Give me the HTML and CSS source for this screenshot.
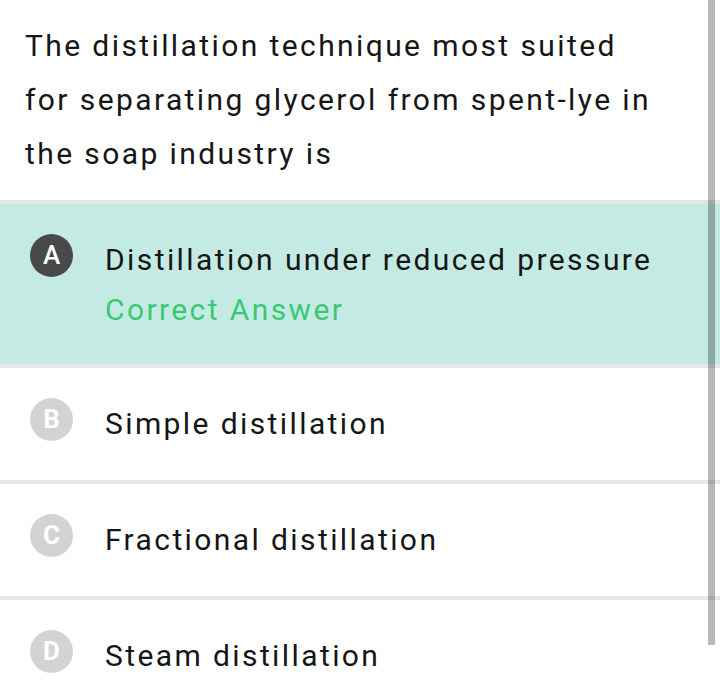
FILE: index.html
```html
<!DOCTYPE html>
<html lang="en">
<head>
  <meta charset="UTF-8" />
  <meta name="viewport" content="width=device-width, initial-scale=1.0"/>
  <title>Question</title>
  <link rel="stylesheet" href="styles.css">
</head>
<body>
  <div class="screen">
    <div class="question">
      The distillation technique most suited for separating glycerol from spent-lye in the soap industry is
    </div>

    <ul class="options">
      <li class="option correct">
        <span class="badge">A</span>
        <div class="option-body">
          <div class="option-text">Distillation under reduced pressure</div>
          <div class="answer-note">Correct Answer</div>
        </div>
      </li>
      <li class="option">
        <span class="badge">B</span>
        <div class="option-body">
          <div class="option-text">Simple distillation</div>
        </div>
      </li>
      <li class="option">
        <span class="badge">C</span>
        <div class="option-body">
          <div class="option-text">Fractional distillation</div>
        </div>
      </li>
      <li class="option">
        <span class="badge">D</span>
        <div class="option-body">
          <div class="option-text">Steam distillation</div>
        </div>
      </li>
    </ul>

    <div class="scrollbar"></div>
  </div>
</body>
</html>
```

FILE: styles.css
```css
body {
  margin: 0;
  background: #fff;
  font-family: Roboto, 'Noto Sans', sans-serif;
  color: #161616;
}

.screen {
  position: relative;
  width: 720px;
  height: 696px;
  overflow: hidden;
}

.question {
  padding: 19px 54px 19px 25px;
  font-size: 30px;
  line-height: 54px;
  letter-spacing: 2.4px;
}

.options {
  list-style: none;
  margin: 0;
  padding: 0;
}

.option {
  display: flex;
  align-items: flex-start;
  gap: 32px;
  padding: 31px 20px 31px 30px;
  border-top: 4px solid #e8e8e8;
}

.option.correct {
  background: #c4ebe3;
  padding-bottom: 29px;
  border-top-color: #e1e7e6;
}

.badge {
  flex: none;
  width: 43px;
  height: 43px;
  margin-top: -1px;
  border-radius: 50%;
  background: #d3d3d3;
  color: #fff;
  font-size: 26px;
  font-weight: 700;
  line-height: 43px;
  text-align: center;
}

.correct .badge {
  background: #484a4a;
  font-weight: 500;
}

.option-text,
.answer-note {
  font-size: 30px;
  line-height: 50px;
  letter-spacing: 2.4px;
}

.answer-note {
  color: #3cc873;
}

.scrollbar {
  position: absolute;
  top: 0;
  left: 708px;
  width: 7px;
  height: 645px;
  background: rgba(0, 0, 0, 0.28);
}
```
